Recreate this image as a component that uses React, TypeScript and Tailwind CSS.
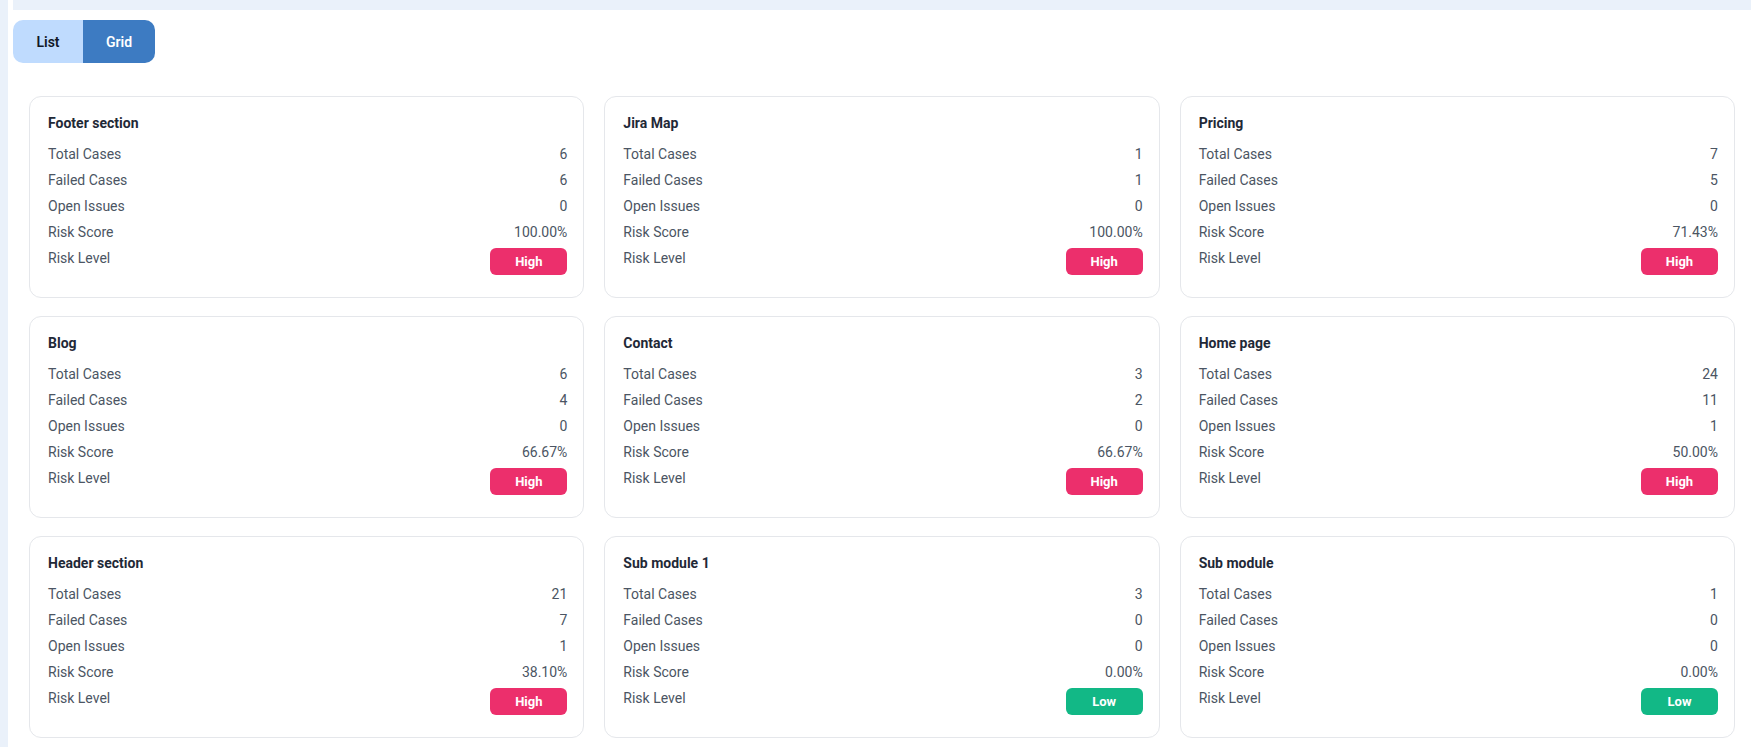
import React, { useState } from 'react';

interface Module {
  name: string;
  total: number;
  failed: number;
  openIssues: number;
  riskScore: string;
  level: 'High' | 'Low';
}

const modules: Module[] = [
  { name: 'Footer section', total: 6, failed: 6, openIssues: 0, riskScore: '100.00%', level: 'High' },
  { name: 'Jira Map', total: 1, failed: 1, openIssues: 0, riskScore: '100.00%', level: 'High' },
  { name: 'Pricing', total: 7, failed: 5, openIssues: 0, riskScore: '71.43%', level: 'High' },
  { name: 'Blog', total: 6, failed: 4, openIssues: 0, riskScore: '66.67%', level: 'High' },
  { name: 'Contact', total: 3, failed: 2, openIssues: 0, riskScore: '66.67%', level: 'High' },
  { name: 'Home page', total: 24, failed: 11, openIssues: 1, riskScore: '50.00%', level: 'High' },
  { name: 'Header section', total: 21, failed: 7, openIssues: 1, riskScore: '38.10%', level: 'High' },
  { name: 'Sub module 1', total: 3, failed: 0, openIssues: 0, riskScore: '0.00%', level: 'Low' },
  { name: 'Sub module', total: 1, failed: 0, openIssues: 0, riskScore: '0.00%', level: 'Low' },
];

function StatRow({ label, value }: { label: string; value: React.ReactNode }) {
  return (
    <div className="flex items-start justify-between text-sm leading-5 text-[#4b5563]">
      <span>{label}</span>
      <span>{value}</span>
    </div>
  );
}

function ModuleCard({ m }: { m: Module }) {
  return (
    <div className="rounded-xl border border-[#e5e7eb] bg-white pl-[18px] pr-4 pt-4 pb-[22px]">
      <h3 className="mb-[11px] text-sm leading-5 font-bold text-[#1f2937]">{m.name}</h3>
      <div className="flex flex-col gap-1.5">
        <StatRow label="Total Cases" value={m.total} />
        <StatRow label="Failed Cases" value={m.failed} />
        <StatRow label="Open Issues" value={m.openIssues} />
        <StatRow label="Risk Score" value={m.riskScore} />
        <div className="flex items-start justify-between text-sm leading-5 text-[#4b5563]">
          <span>Risk Level</span>
          <span
            className={`flex h-[27px] w-[77px] items-center justify-center rounded-md text-[13px] font-bold text-white ${
              m.level === 'High' ? 'bg-[#ec2f6c]' : 'bg-[#12b886]'
            }`}
          >
            {m.level}
          </span>
        </div>
      </div>
    </div>
  );
}

export default function App() {
  const [view, setView] = useState<'list' | 'grid'>('grid');

  return (
    <div className="flex min-h-screen bg-white font-['Roboto',sans-serif]">
      {/* Sidebar edge */}
      <div className="w-2 shrink-0 bg-[#eaf1fa]" />

      <main className="flex-1 pl-[5px]">
        {/* Header strip */}
        <div className="h-[10px] bg-[#eaf1fa]" />

        {/* View toggle */}
        <div className="mt-[10px] flex">
          <div className="flex h-[43px] overflow-hidden rounded-[10px] text-sm font-semibold">
            <button
              onClick={() => setView('list')}
              className={`w-[70px] ${view === 'list' ? 'bg-[#3d7bc2] text-white' : 'bg-[#bfdbfe] text-[#111827]'}`}
            >
              List
            </button>
            <button
              onClick={() => setView('grid')}
              className={`w-[72px] ${view === 'grid' ? 'bg-[#3d7bc2] text-white' : 'bg-[#bfdbfe] text-[#111827]'}`}
            >
              Grid
            </button>
          </div>
        </div>

        {/* Module cards */}
        <div className="mt-[33px] grid grid-cols-3 gap-x-5 gap-y-[18px] px-4">
          {modules.map(m => (
            <ModuleCard key={m.name} m={m} />
          ))}
        </div>
      </main>
    </div>
  );
}
